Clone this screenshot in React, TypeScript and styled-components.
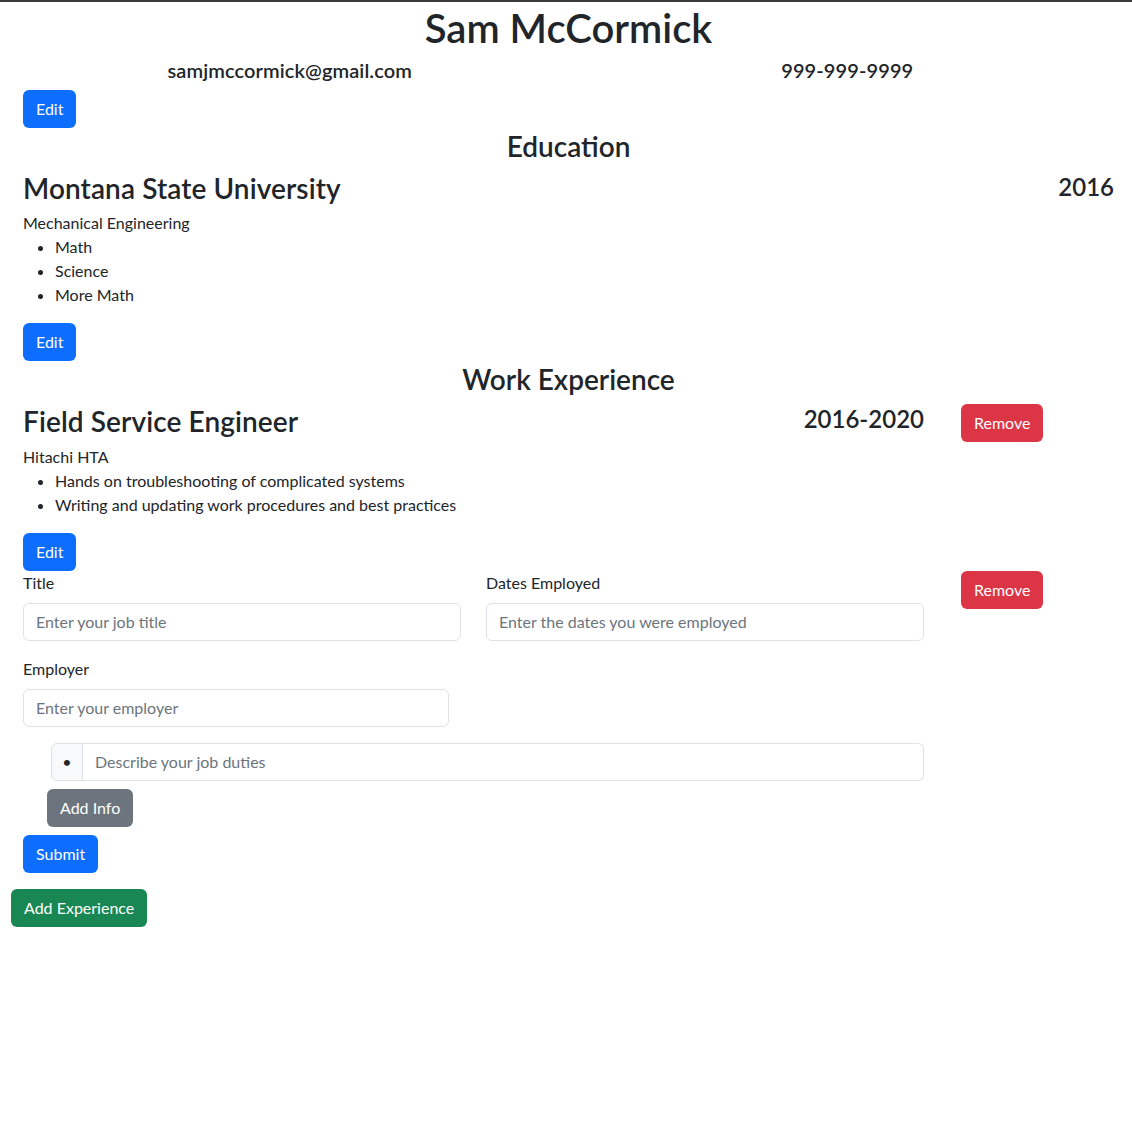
import React from "react";
import styled, { createGlobalStyle } from "styled-components";

const GlobalStyle = createGlobalStyle`
  html, body { margin: 0; padding: 0; background: #fff; }
  body {
    border-top: 2px solid #3b3b3b;
    font-family: "Lato", "Open Sans", sans-serif;
    font-size: 16px;
    line-height: 1.5;
    color: #212529;
  }
  * { box-sizing: border-box; }
`;

const Page = styled.div`
  padding: 0 6px 40px 11px;
`;

const Section = styled.section`
  padding: 0 12px;
  display: flex;
  flex-direction: column;
  align-items: flex-start;
`;

const Name = styled.h1`
  margin: 2px 0 6px;
  font-size: 40px;
  font-weight: 600;
  line-height: 48px;
  text-align: center;
  align-self: stretch;
`;

const ContactRow = styled.div`
  display: grid;
  grid-template-columns: 1fr 1fr;
  margin: 0 -12px 8px;
  align-self: stretch;
`;

const ContactItem = styled.h5`
  margin: 0;
  font-size: 20px;
  font-weight: 600;
  line-height: 24px;
  letter-spacing: 0.1px;
  text-align: center;
`;

const SectionTitle = styled.h3`
  margin: 1px 0 8px;
  font-size: 28px;
  font-weight: 600;
  line-height: 34px;
  text-align: center;
  align-self: stretch;
`;

const EntryRow = styled.div`
  display: grid;
  grid-template-columns: 438px 438px auto;
  column-gap: 25px;
  align-items: start;
  align-self: stretch;
`;

const EduRow = styled.div`
  display: flex;
  justify-content: space-between;
  align-items: center;
  align-self: stretch;
`;

const EntryName = styled.h3`
  margin: 0;
  font-size: 28px;
  font-weight: 600;
  line-height: 34px;
  letter-spacing: 0.1px;
  white-space: nowrap;
`;

const EntryDate = styled.h4`
  margin: 0 0 3px;
  font-size: 24px;
  font-weight: 600;
  line-height: 29px;
  text-align: right;
`;

const Sub = styled.div<{ $mt: number }>`
  margin-top: ${(p) => p.$mt}px;
  line-height: 24px;
`;

const List = styled.ul`
  margin: 0 0 16px;
  padding-left: 32px;
  line-height: 24px;
`;

const Btn = styled.button<{ $variant: "primary" | "danger" | "secondary" | "success"; $ml?: number }>`
  font-family: inherit;
  font-size: 16px;
  line-height: 24px;
  padding: 6px 12px;
  border-radius: 6px;
  border: 1px solid transparent;
  color: #fff;
  margin-left: ${(p) => p.$ml ?? 0}px;
  background: ${(p) =>
    p.$variant === "primary"
      ? "#0d6efd"
      : p.$variant === "danger"
      ? "#dc3545"
      : p.$variant === "secondary"
      ? "#6c757d"
      : "#198754"};
  cursor: pointer;
`;

const FormGrid = styled.div`
  display: grid;
  grid-template-columns: 438px 438px auto;
  column-gap: 25px;
  align-self: stretch;
  margin-bottom: 16px;
`;

const Field = styled.div`
  display: flex;
  flex-direction: column;
`;

const Label = styled.label`
  line-height: 24px;
  margin-bottom: 8px;
`;

const Input = styled.input<{ $w?: number }>`
  font-family: inherit;
  font-size: 16px;
  line-height: 24px;
  padding: 6px 12px;
  border: 1px solid #dee2e6;
  border-radius: 6px;
  color: #212529;
  width: ${(p) => (p.$w ? `${p.$w}px` : "100%")};
  &::placeholder { color: #6c757d; opacity: 1; }
`;

const InputGroup = styled.div`
  display: flex;
  width: 873px;
  margin: 16px 0 8px 28px;
`;

const Addon = styled.span`
  display: flex;
  align-items: center;
  justify-content: center;
  width: 32px;
  background: #f8f9fa;
  border: 1px solid #dee2e6;
  border-radius: 6px 0 0 6px;
  font-size: 16px;
`;

const GroupInput = styled(Input)`
  flex: 1;
  border-left: none;
  border-radius: 0 6px 6px 0;
`;

const Stack = styled.div<{ $gap: number; $mt?: number }>`
  display: flex;
  flex-direction: column;
  align-items: flex-start;
  gap: ${(p) => p.$gap}px;
  margin-top: ${(p) => p.$mt ?? 0}px;
`;

export default function App() {
  return (
    <>
      <GlobalStyle />
      <Page>
        <Section>
          <Name>Sam McCormick</Name>
          <ContactRow>
            <ContactItem>samjmccormick@gmail.com</ContactItem>
            <ContactItem>999-999-9999</ContactItem>
          </ContactRow>
          <Btn $variant="primary">Edit</Btn>

          <SectionTitle>Education</SectionTitle>
          <EduRow>
            <EntryName>Montana State University</EntryName>
            <EntryDate>2016</EntryDate>
          </EduRow>
          <Sub $mt={6}>Mechanical Engineering</Sub>
          <List>
            <li>Math</li>
            <li>Science</li>
            <li>More Math</li>
          </List>
          <Btn $variant="primary">Edit</Btn>

          <SectionTitle>Work Experience</SectionTitle>
          <EntryRow>
            <EntryName>Field Service Engineer</EntryName>
            <EntryDate>2016-2020</EntryDate>
            <div>
              <Btn $variant="danger" $ml={12}>Remove</Btn>
            </div>
          </EntryRow>
          <Sub $mt={3}>Hitachi HTA</Sub>
          <List>
            <li>Hands on troubleshooting of complicated systems</li>
            <li>Writing and updating work procedures and best practices</li>
          </List>
          <Btn $variant="primary">Edit</Btn>

          <FormGrid>
            <Field>
              <Label>Title</Label>
              <Input placeholder="Enter your job title" />
            </Field>
            <Field>
              <Label>Dates Employed</Label>
              <Input placeholder="Enter the dates you were employed" />
            </Field>
            <div>
              <Btn $variant="danger" $ml={12}>Remove</Btn>
            </div>
          </FormGrid>
          <Field>
            <Label>Employer</Label>
            <Input $w={426} placeholder="Enter your employer" />
          </Field>
          <InputGroup>
            <Addon>•</Addon>
            <GroupInput placeholder="Describe your job duties" />
          </InputGroup>
          <Stack $gap={8}>
            <Btn $variant="secondary" $ml={24}>Add Info</Btn>
            <Btn $variant="primary">Submit</Btn>
          </Stack>
        </Section>
        <Stack $gap={0} $mt={16}>
          <Btn $variant="success">Add Experience</Btn>
        </Stack>
      </Page>
    </>
  );
}
